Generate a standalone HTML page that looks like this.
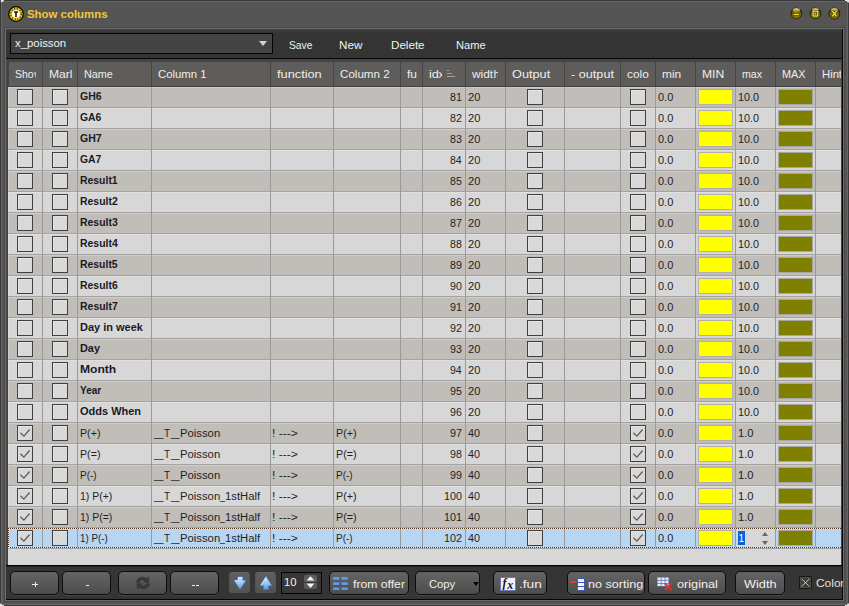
<!DOCTYPE html><html><head><meta charset="utf-8"><title>Show columns</title><style>
html,body{margin:0;padding:0}
body{width:849px;height:606px;overflow:hidden;background:#555;position:relative;font-family:"Liberation Sans",sans-serif;font-size:11.5px;color:#1e1e24}
div,span{position:absolute;box-sizing:border-box;white-space:pre;transform-origin:0 0}
.t{line-height:14px;height:14px}
.w{color:#eee}
.h{top:62px;height:24px;background:#5f5d5b;overflow:hidden}
.r{left:8px;width:833px;height:20px;overflow:hidden}
.o{background:#c1bdb9;box-shadow:inset 1px 1px 0 #cfcbc8}
.e{background:#d7d7d7;box-shadow:inset 1px 1px 0 #e0e0e0}
.s{background:#b8d6f1}
.hl{left:8px;width:833px;height:1px;background:#a5a3a1}
.vl{top:87px;width:1px;height:461px;background:#9c9a98}
.cb{width:16px;height:16px;top:2px;border:1px solid #404040;background:#d9d9d9;box-shadow:inset 1px 1px 0 #e4e4e4}
.c{line-height:14px;height:14px;font-size:10px}
.b{font-weight:bold;font-size:10.7px;color:#1a1a26}
.u{position:static;letter-spacing:-1.25px}
.y{left:690px;top:2px;width:35px;height:16px;background:#ffff00;border:1px solid #b2b0ac}
.m{left:770px;top:2px;width:35px;height:16px;background:#808000;border:1px solid #a9a7a3}
.btn{top:571px;height:24px;border-radius:5px;border:1px solid #0c0c0c;background:linear-gradient(#646464,#595959 50%,#4c4c4c);box-shadow:0 1px 0 #454545;color:#eee}
.ab{top:572px;width:21px;height:21px;border-radius:3px;border:1px solid #565656;border-top-color:#646464;background:linear-gradient(#5f5f5f,#535353)}
.cl{overflow:hidden;top:0;height:20px}
</style></head><body>
<div style="left:0;top:0;width:849px;height:606px;border:1px solid #3a3a3a;border-radius:3px"></div>
<div style="left:1px;top:1px;width:847px;height:604px;border:1px solid #666;border-radius:2px"></div>
<div style="left:1px;top:0px;width:3px;height:1px;background:#e6e6e6"></div>
<div style="left:1px;top:1px;width:2px;height:1px;background:#dcdcdc"></div>
<div style="left:1px;top:2px;width:1px;height:1px;background:#9a9a9a"></div>
<div style="left:845px;top:0px;width:4px;height:1px;background:#e6e6e6"></div>
<div style="left:847px;top:1px;width:2px;height:1px;background:#dcdcdc"></div>
<div style="left:848px;top:2px;width:1px;height:1px;background:#9a9a9a"></div>
<div style="left:0px;top:605px;width:4px;height:1px;background:#e6e6e6"></div>
<div style="left:0px;top:604px;width:2px;height:1px;background:#dcdcdc"></div>
<div style="left:0px;top:603px;width:1px;height:1px;background:#9a9a9a"></div>
<div style="left:845px;top:605px;width:4px;height:1px;background:#e6e6e6"></div>
<div style="left:847px;top:604px;width:2px;height:1px;background:#dcdcdc"></div>
<div style="left:848px;top:603px;width:1px;height:1px;background:#9a9a9a"></div>
<svg style="position:absolute;left:8px;top:6px" width="16" height="16" viewBox="0 0 16 16"><circle cx="8" cy="8" r="7.3" fill="#ecc800" stroke="#0a0a00" stroke-width="1.3"/><circle cx="8" cy="8" r="5.3" fill="none" stroke="#4a3800" stroke-width="1.4" stroke-dasharray="1.1 1.7"/><circle cx="8" cy="8" r="3.9" fill="#fff"/><path d="M6 5.2h4v1.5h-1.2v4.6h-1.6v-4.6h-1.2z" fill="#1a1a1a"/></svg>
<span class="t" style="left:26.97px;top:7.02px;font-weight:bold;transform:scaleX(0.992);color:#f4c832;">Show columns</span>
<svg style="position:absolute;left:0;top:0" width="0" height="0"><defs><radialGradient id="wb" cx="50%" cy="62%" r="55%"><stop offset="0" stop-color="#94841a"/><stop offset="0.65" stop-color="#746608"/><stop offset="0.9" stop-color="#453c04"/><stop offset="1" stop-color="#2a2504"/></radialGradient><linearGradient id="wh" x1="0" y1="0" x2="0" y2="1"><stop offset="0" stop-color="#fffaa8" stop-opacity="1"/><stop offset="1" stop-color="#d8c840" stop-opacity="0.1"/></linearGradient></defs></svg>
<svg style="position:absolute;left:790px;top:7px" width="14" height="14" viewBox="-0.4 -0.5 14 14"><circle cx="6" cy="6" r="5.5" fill="url(#wb)" stroke="#24200a" stroke-width="0.8"/><ellipse cx="6" cy="2.9" rx="3.6" ry="2.1" fill="url(#wh)"/><rect x="2.6" y="5.7" width="6.8" height="2.7" rx="1.3" fill="#3a3204"/><rect x="3.2" y="6.3" width="5.6" height="1.5" rx="0.6" fill="#f0dc30"/></svg>
<svg style="position:absolute;left:809px;top:7px" width="14" height="14" viewBox="-0.4 -0.5 14 14"><circle cx="6" cy="6" r="5.5" fill="url(#wb)" stroke="#24200a" stroke-width="0.8"/><ellipse cx="6" cy="2.9" rx="3.6" ry="2.1" fill="url(#wh)"/><rect x="3.7" y="3.7" width="4.6" height="4.8" fill="none" stroke="#3a3204" stroke-width="2.2"/><rect x="3.7" y="3.7" width="4.6" height="4.8" fill="none" stroke="#f4e034" stroke-width="1.35"/><rect x="5.4" y="5.5" width="1.2" height="1.2" fill="#f4e034"/></svg>
<svg style="position:absolute;left:828px;top:7px" width="14" height="14" viewBox="-0.4 -0.5 14 14"><circle cx="6" cy="6" r="5.5" fill="url(#wb)" stroke="#24200a" stroke-width="0.8"/><ellipse cx="6" cy="2.9" rx="3.6" ry="2.1" fill="url(#wh)"/><path d="M3.9 3.6L8.1 8.8M8.1 3.6L3.9 8.8" stroke="#3a3204" stroke-width="2.4"/><path d="M3.9 3.6L8.1 8.8M8.1 3.6L3.9 8.8" stroke="#f4e034" stroke-width="1.45"/></svg>
<div style="left:4px;top:27px;width:841px;height:575px;border:1px solid #484848"></div>
<div style="left:5px;top:28px;width:839px;height:573px;border:1px solid #6c6c6c;background:#353535"></div>
<div style="left:6px;top:29px;width:836px;height:3px;background:linear-gradient(#424242,#353535)"></div>
<div style="left:842px;top:29px;width:1px;height:571px;background:#050505"></div>
<div style="left:6px;top:599px;width:837px;height:1px;background:#050505"></div>
<div style="left:6px;top:32px;width:836px;height:26px;background:#343434"></div>
<div style="left:10px;top:33px;width:263px;height:21px;background:#434343;border:1px solid #050505"></div>
<span class="t" style="left:15.37px;top:36.42px;transform:scaleX(0.988);color:#f2f2f2;">x_poisson</span>
<div style="left:259px;top:41px;width:0;height:0;border-left:4px solid transparent;border-right:4px solid transparent;border-top:5px solid #d4d4d4"></div>
<span class="t" style="left:288.83px;top:38.02px;transform:scaleX(0.894);color:#f2f2f2;">Save</span>
<span class="t" style="left:338.64px;top:38.02px;transform:scaleX(1.014);color:#f2f2f2;">New</span>
<span class="t" style="left:390.55px;top:38.02px;transform:scaleX(1.01);color:#f2f2f2;">Delete</span>
<span class="t" style="left:455.69px;top:38.02px;transform:scaleX(0.965);color:#f2f2f2;">Name</span>
<div style="left:6px;top:58px;width:836px;height:1px;background:#050505"></div>
<div style="left:6px;top:59px;width:836px;height:506px;background:#454545"></div>
<div style="left:8px;top:86px;width:833px;height:479px;background:#d7d7d7"></div>
<div style="left:8px;top:86px;width:833px;height:1px;background:#414141"></div>
<div style="left:6px;top:565px;width:836px;height:1px;background:#050505"></div><div style="left:6px;top:566px;width:836px;height:1px;background:#242424"></div>
<div class="h" style="left:9px;width:33px"><span class="t" style="left:6.02px;top:5.02px;transform:scaleX(0.91);color:#eee;">Sho</span><span class="t" style="left:25.22px;top:5.02px;color:#eee;width:1.7px;overflow:hidden;">w</span></div>
<div class="h" style="left:43px;width:34px"><span class="t" style="left:5.61px;top:5.02px;transform:scaleX(1.051);color:#eee;">Marl</span></div>
<div class="h" style="left:78px;width:73px"><span class="t" style="left:5.51px;top:5.02px;transform:scaleX(0.941);color:#eee;">Name</span></div>
<div class="h" style="left:152px;width:118px"><span class="t" style="left:6.12px;top:5.02px;transform:scaleX(0.988);color:#eee;">Column 1</span></div>
<div class="h" style="left:271px;width:62px"><span class="t" style="left:5.62px;top:5.02px;transform:scaleX(1.11);color:#eee;">function</span></div>
<div class="h" style="left:334px;width:66px"><span class="t" style="left:5.71px;top:5.02px;transform:scaleX(1.009);color:#eee;">Column 2</span></div>
<div class="h" style="left:401px;width:21px"><span class="t" style="left:5.83px;top:5.02px;transform:scaleX(1.039);color:#eee;">fu</span></div>
<div class="h" style="left:423px;width:42px"><span class="t" style="left:5.95px;top:5.02px;transform:scaleX(1.102);color:#eee;">id</span><span class="t" style="left:15.47px;top:5.02px;color:#eee;width:3.2px;overflow:hidden;">x</span><div style="left:24px;top:8px;width:2px;height:1px;background:#a3a19f"></div><div style="left:24px;top:11px;width:5px;height:1px;background:#a3a19f"></div><div style="left:24px;top:14px;width:8px;height:1px;background:#a3a19f"></div></div>
<div class="h" style="left:466px;width:39px"><span class="t" style="left:6.22px;top:5.02px;transform:scaleX(1.03);color:#eee;">widt</span><span class="t" style="left:27.4px;top:5.02px;color:#eee;width:4.6px;overflow:hidden;">h</span></div>
<div class="h" style="left:506px;width:58px"><span class="t" style="left:5.9px;top:5.02px;transform:scaleX(1.106);color:#eee;">Output</span></div>
<div class="h" style="left:565px;width:55px"><span class="t" style="left:5.84px;top:5.02px;transform:scaleX(1.101);color:#eee;">- output</span></div>
<div class="h" style="left:621px;width:34px"><span class="t" style="left:6.2px;top:5.02px;transform:scaleX(1.029);color:#eee;">colo</span></div>
<div class="h" style="left:656px;width:39px"><span class="t" style="left:6.01px;top:5.02px;transform:scaleX(1.04);color:#eee;">min</span></div>
<div class="h" style="left:696px;width:39px"><span class="t" style="left:5.51px;top:5.02px;transform:scaleX(1.052);color:#eee;">MIN</span></div>
<div class="h" style="left:736px;width:39px"><span class="t" style="left:5.99px;top:5.02px;transform:scaleX(0.926);color:#eee;">max</span></div>
<div class="h" style="left:776px;width:39px"><span class="t" style="left:5.71px;top:5.02px;transform:scaleX(0.944);color:#eee;">MAX</span></div>
<div class="h" style="left:816px;width:25px"><span class="t" style="left:5.67px;top:5.02px;transform:scaleX(0.989);color:#eee;">Hin</span><span class="t" style="left:22.63px;top:5.02px;color:#eee;">t</span></div>
<div style="left:42px;top:62px;width:1px;height:24px;background:#474645"></div>
<div style="left:77px;top:62px;width:1px;height:24px;background:#474645"></div>
<div style="left:151px;top:62px;width:1px;height:24px;background:#474645"></div>
<div style="left:270px;top:62px;width:1px;height:24px;background:#474645"></div>
<div style="left:333px;top:62px;width:1px;height:24px;background:#474645"></div>
<div style="left:400px;top:62px;width:1px;height:24px;background:#474645"></div>
<div style="left:422px;top:62px;width:1px;height:24px;background:#474645"></div>
<div style="left:465px;top:62px;width:1px;height:24px;background:#474645"></div>
<div style="left:505px;top:62px;width:1px;height:24px;background:#474645"></div>
<div style="left:564px;top:62px;width:1px;height:24px;background:#474645"></div>
<div style="left:620px;top:62px;width:1px;height:24px;background:#474645"></div>
<div style="left:655px;top:62px;width:1px;height:24px;background:#474645"></div>
<div style="left:695px;top:62px;width:1px;height:24px;background:#474645"></div>
<div style="left:735px;top:62px;width:1px;height:24px;background:#474645"></div>
<div style="left:775px;top:62px;width:1px;height:24px;background:#474645"></div>
<div style="left:815px;top:62px;width:1px;height:24px;background:#474645"></div>
<div class="r o" style="top:87px">
<div class="cb" style="left:9px"></div><div class="cb" style="left:44px"></div>
<span class="c b" style="left:72.37px;top:1.99px;font-size:10.7px;font-weight:bold;transform:scaleX(0.982);">GH6</span>
<span class="c" style="left:442.44px;top:3.94px;font-size:10px;transform:scaleX(1.069);">81</span>
<span class="c" style="left:459.94px;top:3.94px;font-size:10px;transform:scaleX(1.105);">20</span>
<div class="cb" style="left:519px"></div><div class="cb" style="left:622px"></div>
<span class="c" style="left:649.97px;top:3.94px;font-size:10px;transform:scaleX(1.098);">0.0</span>
<div class="y"></div>
<span class="c" style="left:730.28px;top:3.94px;font-size:10px;transform:scaleX(1.081);">10.0</span>
<div class="m"></div></div>
<div class="hl" style="top:107px"></div>
<div class="r e" style="top:108px">
<div class="cb" style="left:9px"></div><div class="cb" style="left:44px"></div>
<span class="c b" style="left:72.38px;top:1.99px;font-size:10.7px;font-weight:bold;transform:scaleX(0.968);">GA6</span>
<span class="c" style="left:442.44px;top:3.94px;font-size:10px;transform:scaleX(1.07);">82</span>
<span class="c" style="left:459.94px;top:3.94px;font-size:10px;transform:scaleX(1.105);">20</span>
<div class="cb" style="left:519px"></div><div class="cb" style="left:622px"></div>
<span class="c" style="left:649.97px;top:3.94px;font-size:10px;transform:scaleX(1.098);">0.0</span>
<div class="y"></div>
<span class="c" style="left:730.28px;top:3.94px;font-size:10px;transform:scaleX(1.081);">10.0</span>
<div class="m"></div></div>
<div class="hl" style="top:128px"></div>
<div class="r o" style="top:129px">
<div class="cb" style="left:9px"></div><div class="cb" style="left:44px"></div>
<span class="c b" style="left:72.37px;top:1.99px;font-size:10.7px;font-weight:bold;transform:scaleX(0.986);">GH7</span>
<span class="c" style="left:442.44px;top:3.94px;font-size:10px;transform:scaleX(1.064);">83</span>
<span class="c" style="left:459.94px;top:3.94px;font-size:10px;transform:scaleX(1.105);">20</span>
<div class="cb" style="left:519px"></div><div class="cb" style="left:622px"></div>
<span class="c" style="left:649.97px;top:3.94px;font-size:10px;transform:scaleX(1.098);">0.0</span>
<div class="y"></div>
<span class="c" style="left:730.28px;top:3.94px;font-size:10px;transform:scaleX(1.081);">10.0</span>
<div class="m"></div></div>
<div class="hl" style="top:149px"></div>
<div class="r e" style="top:150px">
<div class="cb" style="left:9px"></div><div class="cb" style="left:44px"></div>
<span class="c b" style="left:72.37px;top:1.99px;font-size:10.7px;font-weight:bold;transform:scaleX(0.972);">GA7</span>
<span class="c" style="left:442.44px;top:3.94px;font-size:10px;transform:scaleX(1.049);">84</span>
<span class="c" style="left:459.94px;top:3.94px;font-size:10px;transform:scaleX(1.105);">20</span>
<div class="cb" style="left:519px"></div><div class="cb" style="left:622px"></div>
<span class="c" style="left:649.97px;top:3.94px;font-size:10px;transform:scaleX(1.098);">0.0</span>
<div class="y"></div>
<span class="c" style="left:730.28px;top:3.94px;font-size:10px;transform:scaleX(1.081);">10.0</span>
<div class="m"></div></div>
<div class="hl" style="top:170px"></div>
<div class="r o" style="top:171px">
<div class="cb" style="left:9px"></div><div class="cb" style="left:44px"></div>
<span class="c b" style="left:72.1px;top:1.99px;font-size:10.7px;font-weight:bold;transform:scaleX(0.975);">Result1</span>
<span class="c" style="left:442.44px;top:3.94px;font-size:10px;transform:scaleX(1.061);">85</span>
<span class="c" style="left:459.94px;top:3.94px;font-size:10px;transform:scaleX(1.105);">20</span>
<div class="cb" style="left:519px"></div><div class="cb" style="left:622px"></div>
<span class="c" style="left:649.97px;top:3.94px;font-size:10px;transform:scaleX(1.098);">0.0</span>
<div class="y"></div>
<span class="c" style="left:730.28px;top:3.94px;font-size:10px;transform:scaleX(1.081);">10.0</span>
<div class="m"></div></div>
<div class="hl" style="top:191px"></div>
<div class="r e" style="top:192px">
<div class="cb" style="left:9px"></div><div class="cb" style="left:44px"></div>
<span class="c b" style="left:72.1px;top:1.99px;font-size:10.7px;font-weight:bold;transform:scaleX(0.978);">Result2</span>
<span class="c" style="left:442.44px;top:3.94px;font-size:10px;transform:scaleX(1.064);">86</span>
<span class="c" style="left:459.94px;top:3.94px;font-size:10px;transform:scaleX(1.105);">20</span>
<div class="cb" style="left:519px"></div><div class="cb" style="left:622px"></div>
<span class="c" style="left:649.97px;top:3.94px;font-size:10px;transform:scaleX(1.098);">0.0</span>
<div class="y"></div>
<span class="c" style="left:730.28px;top:3.94px;font-size:10px;transform:scaleX(1.081);">10.0</span>
<div class="m"></div></div>
<div class="hl" style="top:212px"></div>
<div class="r o" style="top:213px">
<div class="cb" style="left:9px"></div><div class="cb" style="left:44px"></div>
<span class="c b" style="left:72.1px;top:1.99px;font-size:10.7px;font-weight:bold;transform:scaleX(0.977);">Result3</span>
<span class="c" style="left:442.44px;top:3.94px;font-size:10px;transform:scaleX(1.07);">87</span>
<span class="c" style="left:459.94px;top:3.94px;font-size:10px;transform:scaleX(1.105);">20</span>
<div class="cb" style="left:519px"></div><div class="cb" style="left:622px"></div>
<span class="c" style="left:649.97px;top:3.94px;font-size:10px;transform:scaleX(1.098);">0.0</span>
<div class="y"></div>
<span class="c" style="left:730.28px;top:3.94px;font-size:10px;transform:scaleX(1.081);">10.0</span>
<div class="m"></div></div>
<div class="hl" style="top:233px"></div>
<div class="r e" style="top:234px">
<div class="cb" style="left:9px"></div><div class="cb" style="left:44px"></div>
<span class="c b" style="left:72.1px;top:1.99px;font-size:10.7px;font-weight:bold;transform:scaleX(0.977);">Result4</span>
<span class="c" style="left:442.44px;top:3.94px;font-size:10px;transform:scaleX(1.063);">88</span>
<span class="c" style="left:459.94px;top:3.94px;font-size:10px;transform:scaleX(1.105);">20</span>
<div class="cb" style="left:519px"></div><div class="cb" style="left:622px"></div>
<span class="c" style="left:649.97px;top:3.94px;font-size:10px;transform:scaleX(1.098);">0.0</span>
<div class="y"></div>
<span class="c" style="left:730.28px;top:3.94px;font-size:10px;transform:scaleX(1.081);">10.0</span>
<div class="m"></div></div>
<div class="hl" style="top:254px"></div>
<div class="r o" style="top:255px">
<div class="cb" style="left:9px"></div><div class="cb" style="left:44px"></div>
<span class="c b" style="left:72.1px;top:1.99px;font-size:10.7px;font-weight:bold;transform:scaleX(0.975);">Result5</span>
<span class="c" style="left:442.44px;top:3.94px;font-size:10px;transform:scaleX(1.067);">89</span>
<span class="c" style="left:459.94px;top:3.94px;font-size:10px;transform:scaleX(1.105);">20</span>
<div class="cb" style="left:519px"></div><div class="cb" style="left:622px"></div>
<span class="c" style="left:649.97px;top:3.94px;font-size:10px;transform:scaleX(1.098);">0.0</span>
<div class="y"></div>
<span class="c" style="left:730.28px;top:3.94px;font-size:10px;transform:scaleX(1.081);">10.0</span>
<div class="m"></div></div>
<div class="hl" style="top:275px"></div>
<div class="r e" style="top:276px">
<div class="cb" style="left:9px"></div><div class="cb" style="left:44px"></div>
<span class="c b" style="left:72.1px;top:1.99px;font-size:10.7px;font-weight:bold;transform:scaleX(0.977);">Result6</span>
<span class="c" style="left:442.4px;top:3.94px;font-size:10px;transform:scaleX(1.062);">90</span>
<span class="c" style="left:459.94px;top:3.94px;font-size:10px;transform:scaleX(1.105);">20</span>
<div class="cb" style="left:519px"></div><div class="cb" style="left:622px"></div>
<span class="c" style="left:649.97px;top:3.94px;font-size:10px;transform:scaleX(1.098);">0.0</span>
<div class="y"></div>
<span class="c" style="left:730.28px;top:3.94px;font-size:10px;transform:scaleX(1.081);">10.0</span>
<div class="m"></div></div>
<div class="hl" style="top:296px"></div>
<div class="r o" style="top:297px">
<div class="cb" style="left:9px"></div><div class="cb" style="left:44px"></div>
<span class="c b" style="left:72.1px;top:1.99px;font-size:10.7px;font-weight:bold;transform:scaleX(0.98);">Result7</span>
<span class="c" style="left:442.4px;top:3.94px;font-size:10px;transform:scaleX(1.072);">91</span>
<span class="c" style="left:459.94px;top:3.94px;font-size:10px;transform:scaleX(1.105);">20</span>
<div class="cb" style="left:519px"></div><div class="cb" style="left:622px"></div>
<span class="c" style="left:649.97px;top:3.94px;font-size:10px;transform:scaleX(1.098);">0.0</span>
<div class="y"></div>
<span class="c" style="left:730.28px;top:3.94px;font-size:10px;transform:scaleX(1.081);">10.0</span>
<div class="m"></div></div>
<div class="hl" style="top:317px"></div>
<div class="r e" style="top:318px">
<div class="cb" style="left:9px"></div><div class="cb" style="left:44px"></div>
<span class="c b" style="left:72.06px;top:1.99px;font-size:10.7px;font-weight:bold;transform:scaleX(1.027);">Day in week</span>
<span class="c" style="left:442.4px;top:3.94px;font-size:10px;transform:scaleX(1.074);">92</span>
<span class="c" style="left:459.94px;top:3.94px;font-size:10px;transform:scaleX(1.105);">20</span>
<div class="cb" style="left:519px"></div><div class="cb" style="left:622px"></div>
<span class="c" style="left:649.97px;top:3.94px;font-size:10px;transform:scaleX(1.098);">0.0</span>
<div class="y"></div>
<span class="c" style="left:730.28px;top:3.94px;font-size:10px;transform:scaleX(1.081);">10.0</span>
<div class="m"></div></div>
<div class="hl" style="top:338px"></div>
<div class="r o" style="top:339px">
<div class="cb" style="left:9px"></div><div class="cb" style="left:44px"></div>
<span class="c b" style="left:72.07px;top:1.99px;font-size:10.7px;font-weight:bold;transform:scaleX(1.018);">Day</span>
<span class="c" style="left:442.4px;top:3.94px;font-size:10px;transform:scaleX(1.067);">93</span>
<span class="c" style="left:459.94px;top:3.94px;font-size:10px;transform:scaleX(1.105);">20</span>
<div class="cb" style="left:519px"></div><div class="cb" style="left:622px"></div>
<span class="c" style="left:649.97px;top:3.94px;font-size:10px;transform:scaleX(1.098);">0.0</span>
<div class="y"></div>
<span class="c" style="left:730.28px;top:3.94px;font-size:10px;transform:scaleX(1.081);">10.0</span>
<div class="m"></div></div>
<div class="hl" style="top:359px"></div>
<div class="r e" style="top:360px">
<div class="cb" style="left:9px"></div><div class="cb" style="left:44px"></div>
<span class="c b" style="left:71.99px;top:1.99px;font-size:10.7px;font-weight:bold;transform:scaleX(1.13);">Month</span>
<span class="c" style="left:442.41px;top:3.94px;font-size:10px;transform:scaleX(1.052);">94</span>
<span class="c" style="left:459.94px;top:3.94px;font-size:10px;transform:scaleX(1.105);">20</span>
<div class="cb" style="left:519px"></div><div class="cb" style="left:622px"></div>
<span class="c" style="left:649.97px;top:3.94px;font-size:10px;transform:scaleX(1.098);">0.0</span>
<div class="y"></div>
<span class="c" style="left:730.28px;top:3.94px;font-size:10px;transform:scaleX(1.081);">10.0</span>
<div class="m"></div></div>
<div class="hl" style="top:380px"></div>
<div class="r o" style="top:381px">
<div class="cb" style="left:9px"></div><div class="cb" style="left:44px"></div>
<span class="c b" style="left:72.33px;top:1.99px;font-size:10.7px;font-weight:bold;transform:scaleX(0.941);">Year</span>
<span class="c" style="left:442.4px;top:3.94px;font-size:10px;transform:scaleX(1.065);">95</span>
<span class="c" style="left:459.94px;top:3.94px;font-size:10px;transform:scaleX(1.105);">20</span>
<div class="cb" style="left:519px"></div><div class="cb" style="left:622px"></div>
<span class="c" style="left:649.97px;top:3.94px;font-size:10px;transform:scaleX(1.098);">0.0</span>
<div class="y"></div>
<span class="c" style="left:730.28px;top:3.94px;font-size:10px;transform:scaleX(1.081);">10.0</span>
<div class="m"></div></div>
<div class="hl" style="top:401px"></div>
<div class="r e" style="top:402px">
<div class="cb" style="left:9px"></div><div class="cb" style="left:44px"></div>
<span class="c b" style="left:72.15px;top:1.99px;font-size:10.7px;font-weight:bold;transform:scaleX(1.028);">Odds When</span>
<span class="c" style="left:442.4px;top:3.94px;font-size:10px;transform:scaleX(1.067);">96</span>
<span class="c" style="left:459.94px;top:3.94px;font-size:10px;transform:scaleX(1.105);">20</span>
<div class="cb" style="left:519px"></div><div class="cb" style="left:622px"></div>
<span class="c" style="left:649.97px;top:3.94px;font-size:10px;transform:scaleX(1.098);">0.0</span>
<div class="y"></div>
<span class="c" style="left:730.28px;top:3.94px;font-size:10px;transform:scaleX(1.081);">10.0</span>
<div class="m"></div></div>
<div class="hl" style="top:422px"></div>
<div class="r o" style="top:423px">
<div class="cb" style="left:9px"><svg style="position:absolute;left:0;top:0" width="14" height="14" viewBox="0 0 14 14"><path d="M2.4 6.7L5.9 10.2L11.6 3.5" fill="none" stroke="#5c5c5c" stroke-width="1.25"/></svg></div><div class="cb" style="left:44px"></div>
<span class="c" style="left:71.73px;top:3.94px;font-size:10px;transform:scaleX(1.066);">P(+)</span>
<span class="c" style="left:145.93px;top:3.94px;font-size:10px;transform:scaleX(0.843);">__</span>
<span class="c" style="left:155.88px;top:3.94px;font-size:10px;">T</span>
<span class="c" style="left:163.32px;top:3.94px;font-size:10px;transform:scaleX(0.773);">__</span>
<span class="c" style="left:171.87px;top:3.94px;font-size:10px;transform:scaleX(1.129);">Poisson</span>
<span class="c" style="left:264.12px;top:3.94px;font-size:10px;transform:scaleX(1.2);">! ---&gt;</span>
<span class="c" style="left:327.82px;top:3.94px;font-size:10px;transform:scaleX(1.077);">P(+)</span>
<span class="c" style="left:442.4px;top:3.94px;font-size:10px;transform:scaleX(1.074);">97</span>
<span class="c" style="left:460.25px;top:3.94px;font-size:10px;transform:scaleX(1.076);">40</span>
<div class="cb" style="left:519px"></div><div class="cb" style="left:622px"><svg style="position:absolute;left:0;top:0" width="14" height="14" viewBox="0 0 14 14"><path d="M2.4 6.7L5.9 10.2L11.6 3.5" fill="none" stroke="#5c5c5c" stroke-width="1.25"/></svg></div>
<span class="c" style="left:649.97px;top:3.94px;font-size:10px;transform:scaleX(1.098);">0.0</span>
<div class="y"></div>
<span class="c" style="left:730.25px;top:3.94px;font-size:10px;transform:scaleX(1.114);">1.0</span>
<div class="m"></div></div>
<div class="hl" style="top:443px"></div>
<div class="r e" style="top:444px">
<div class="cb" style="left:9px"><svg style="position:absolute;left:0;top:0" width="14" height="14" viewBox="0 0 14 14"><path d="M2.4 6.7L5.9 10.2L11.6 3.5" fill="none" stroke="#5c5c5c" stroke-width="1.25"/></svg></div><div class="cb" style="left:44px"></div>
<span class="c" style="left:71.73px;top:3.94px;font-size:10px;transform:scaleX(1.066);">P(=)</span>
<span class="c" style="left:145.93px;top:3.94px;font-size:10px;transform:scaleX(0.843);">__</span>
<span class="c" style="left:155.88px;top:3.94px;font-size:10px;">T</span>
<span class="c" style="left:163.32px;top:3.94px;font-size:10px;transform:scaleX(0.773);">__</span>
<span class="c" style="left:171.87px;top:3.94px;font-size:10px;transform:scaleX(1.129);">Poisson</span>
<span class="c" style="left:264.12px;top:3.94px;font-size:10px;transform:scaleX(1.2);">! ---&gt;</span>
<span class="c" style="left:327.82px;top:3.94px;font-size:10px;transform:scaleX(1.077);">P(=)</span>
<span class="c" style="left:442.4px;top:3.94px;font-size:10px;transform:scaleX(1.067);">98</span>
<span class="c" style="left:460.25px;top:3.94px;font-size:10px;transform:scaleX(1.076);">40</span>
<div class="cb" style="left:519px"></div><div class="cb" style="left:622px"><svg style="position:absolute;left:0;top:0" width="14" height="14" viewBox="0 0 14 14"><path d="M2.4 6.7L5.9 10.2L11.6 3.5" fill="none" stroke="#5c5c5c" stroke-width="1.25"/></svg></div>
<span class="c" style="left:649.97px;top:3.94px;font-size:10px;transform:scaleX(1.098);">0.0</span>
<div class="y"></div>
<span class="c" style="left:730.25px;top:3.94px;font-size:10px;transform:scaleX(1.114);">1.0</span>
<div class="m"></div></div>
<div class="hl" style="top:464px"></div>
<div class="r o" style="top:465px">
<div class="cb" style="left:9px"><svg style="position:absolute;left:0;top:0" width="14" height="14" viewBox="0 0 14 14"><path d="M2.4 6.7L5.9 10.2L11.6 3.5" fill="none" stroke="#5c5c5c" stroke-width="1.25"/></svg></div><div class="cb" style="left:44px"></div>
<span class="c" style="left:71.78px;top:3.94px;font-size:10px;transform:scaleX(0.999);">P(-)</span>
<span class="c" style="left:145.93px;top:3.94px;font-size:10px;transform:scaleX(0.843);">__</span>
<span class="c" style="left:155.88px;top:3.94px;font-size:10px;">T</span>
<span class="c" style="left:163.32px;top:3.94px;font-size:10px;transform:scaleX(0.773);">__</span>
<span class="c" style="left:171.87px;top:3.94px;font-size:10px;transform:scaleX(1.129);">Poisson</span>
<span class="c" style="left:264.12px;top:3.94px;font-size:10px;transform:scaleX(1.2);">! ---&gt;</span>
<span class="c" style="left:327.88px;top:3.94px;font-size:10px;transform:scaleX(0.999);">P(-)</span>
<span class="c" style="left:442.4px;top:3.94px;font-size:10px;transform:scaleX(1.071);">99</span>
<span class="c" style="left:460.25px;top:3.94px;font-size:10px;transform:scaleX(1.076);">40</span>
<div class="cb" style="left:519px"></div><div class="cb" style="left:622px"><svg style="position:absolute;left:0;top:0" width="14" height="14" viewBox="0 0 14 14"><path d="M2.4 6.7L5.9 10.2L11.6 3.5" fill="none" stroke="#5c5c5c" stroke-width="1.25"/></svg></div>
<span class="c" style="left:649.97px;top:3.94px;font-size:10px;transform:scaleX(1.098);">0.0</span>
<div class="y"></div>
<span class="c" style="left:730.25px;top:3.94px;font-size:10px;transform:scaleX(1.114);">1.0</span>
<div class="m"></div></div>
<div class="hl" style="top:485px"></div>
<div class="r e" style="top:486px">
<div class="cb" style="left:9px"><svg style="position:absolute;left:0;top:0" width="14" height="14" viewBox="0 0 14 14"><path d="M2.4 6.7L5.9 10.2L11.6 3.5" fill="none" stroke="#5c5c5c" stroke-width="1.25"/></svg></div><div class="cb" style="left:44px"></div>
<span class="c" style="left:71.8px;top:3.94px;font-size:10px;transform:scaleX(1.049);">1) P(+)</span>
<span class="c" style="left:145.93px;top:3.94px;font-size:10px;transform:scaleX(0.843);">__</span>
<span class="c" style="left:155.88px;top:3.94px;font-size:10px;">T</span>
<span class="c" style="left:163.32px;top:3.94px;font-size:10px;transform:scaleX(0.773);">__</span>
<span class="c" style="left:171.87px;top:3.94px;font-size:10px;transform:scaleX(1.129);">Poisson</span>
<span class="c" style="left:212.15px;top:3.94px;font-size:10px;transform:scaleX(0.88);">_</span>
<span class="c" style="left:217.14px;top:3.94px;font-size:10px;transform:scaleX(1.126);">1stHalf</span>
<span class="c" style="left:264.12px;top:3.94px;font-size:10px;transform:scaleX(1.2);">! ---&gt;</span>
<span class="c" style="left:327.82px;top:3.94px;font-size:10px;transform:scaleX(1.077);">P(+)</span>
<span class="c" style="left:436.28px;top:3.94px;font-size:10px;transform:scaleX(1.075);">100</span>
<span class="c" style="left:460.25px;top:3.94px;font-size:10px;transform:scaleX(1.076);">40</span>
<div class="cb" style="left:519px"></div><div class="cb" style="left:622px"><svg style="position:absolute;left:0;top:0" width="14" height="14" viewBox="0 0 14 14"><path d="M2.4 6.7L5.9 10.2L11.6 3.5" fill="none" stroke="#5c5c5c" stroke-width="1.25"/></svg></div>
<span class="c" style="left:649.97px;top:3.94px;font-size:10px;transform:scaleX(1.098);">0.0</span>
<div class="y"></div>
<span class="c" style="left:730.25px;top:3.94px;font-size:10px;transform:scaleX(1.114);">1.0</span>
<div class="m"></div></div>
<div class="hl" style="top:506px"></div>
<div class="r o" style="top:507px">
<div class="cb" style="left:9px"><svg style="position:absolute;left:0;top:0" width="14" height="14" viewBox="0 0 14 14"><path d="M2.4 6.7L5.9 10.2L11.6 3.5" fill="none" stroke="#5c5c5c" stroke-width="1.25"/></svg></div><div class="cb" style="left:44px"></div>
<span class="c" style="left:71.8px;top:3.94px;font-size:10px;transform:scaleX(1.049);">1) P(=)</span>
<span class="c" style="left:145.93px;top:3.94px;font-size:10px;transform:scaleX(0.843);">__</span>
<span class="c" style="left:155.88px;top:3.94px;font-size:10px;">T</span>
<span class="c" style="left:163.32px;top:3.94px;font-size:10px;transform:scaleX(0.773);">__</span>
<span class="c" style="left:171.87px;top:3.94px;font-size:10px;transform:scaleX(1.129);">Poisson</span>
<span class="c" style="left:212.15px;top:3.94px;font-size:10px;transform:scaleX(0.88);">_</span>
<span class="c" style="left:217.14px;top:3.94px;font-size:10px;transform:scaleX(1.126);">1stHalf</span>
<span class="c" style="left:264.12px;top:3.94px;font-size:10px;transform:scaleX(1.2);">! ---&gt;</span>
<span class="c" style="left:327.82px;top:3.94px;font-size:10px;transform:scaleX(1.077);">P(=)</span>
<span class="c" style="left:436.28px;top:3.94px;font-size:10px;transform:scaleX(1.082);">101</span>
<span class="c" style="left:460.25px;top:3.94px;font-size:10px;transform:scaleX(1.076);">40</span>
<div class="cb" style="left:519px"></div><div class="cb" style="left:622px"><svg style="position:absolute;left:0;top:0" width="14" height="14" viewBox="0 0 14 14"><path d="M2.4 6.7L5.9 10.2L11.6 3.5" fill="none" stroke="#5c5c5c" stroke-width="1.25"/></svg></div>
<span class="c" style="left:649.97px;top:3.94px;font-size:10px;transform:scaleX(1.098);">0.0</span>
<div class="y"></div>
<span class="c" style="left:730.25px;top:3.94px;font-size:10px;transform:scaleX(1.114);">1.0</span>
<div class="m"></div></div>
<div class="hl" style="top:527px"></div>
<div class="r s" style="top:528px">
<div class="cb" style="left:9px"><svg style="position:absolute;left:0;top:0" width="14" height="14" viewBox="0 0 14 14"><path d="M2.4 6.7L5.9 10.2L11.6 3.5" fill="none" stroke="#5c5c5c" stroke-width="1.25"/></svg></div><div class="cb" style="left:44px"></div>
<span class="c" style="left:71.85px;top:3.93px;font-size:10px;transform:scaleX(0.983);">1) P(-)</span>
<span class="c" style="left:145.93px;top:3.93px;font-size:10px;transform:scaleX(0.843);">__</span>
<span class="c" style="left:155.88px;top:3.93px;font-size:10px;">T</span>
<span class="c" style="left:163.32px;top:3.93px;font-size:10px;transform:scaleX(0.773);">__</span>
<span class="c" style="left:171.87px;top:3.93px;font-size:10px;transform:scaleX(1.129);">Poisson</span>
<span class="c" style="left:212.15px;top:3.93px;font-size:10px;transform:scaleX(0.88);">_</span>
<span class="c" style="left:217.14px;top:3.93px;font-size:10px;transform:scaleX(1.126);">1stHalf</span>
<span class="c" style="left:264.12px;top:3.93px;font-size:10px;transform:scaleX(1.2);">! ---&gt;</span>
<span class="c" style="left:327.88px;top:3.93px;font-size:10px;transform:scaleX(0.999);">P(-)</span>
<span class="c" style="left:436.28px;top:3.93px;font-size:10px;transform:scaleX(1.083);">102</span>
<span class="c" style="left:460.25px;top:3.93px;font-size:10px;transform:scaleX(1.076);">40</span>
<div class="cb" style="left:519px"></div><div class="cb" style="left:622px"><svg style="position:absolute;left:0;top:0" width="14" height="14" viewBox="0 0 14 14"><path d="M2.4 6.7L5.9 10.2L11.6 3.5" fill="none" stroke="#5c5c5c" stroke-width="1.25"/></svg></div>
<span class="c" style="left:649.97px;top:3.93px;font-size:10px;transform:scaleX(1.098);">0.0</span>
<div class="y"></div>
<div style="left:728px;top:0;width:39px;height:20px;background:#d7d7d7"></div><div style="left:730px;top:3px;width:7px;height:14px;background:#0a64d8"></div>
<span class="c" style="left:730.44px;top:3.93px;font-size:10px;color:#fff;">1</span>
<div style="left:754px;top:4px;width:0;height:0;border-left:3.5px solid transparent;border-right:3.5px solid transparent;border-bottom:4px solid #666"></div><div style="left:754px;top:13px;width:0;height:0;border-left:3.5px solid transparent;border-right:3.5px solid transparent;border-top:4px solid #666"></div>
<div class="m"></div></div>
<div class="hl" style="top:548px"></div>
<div class="vl" style="left:42px"></div>
<div class="vl" style="left:77px"></div>
<div class="vl" style="left:151px"></div>
<div class="vl" style="left:270px"></div>
<div class="vl" style="left:333px"></div>
<div class="vl" style="left:400px"></div>
<div class="vl" style="left:422px"></div>
<div class="vl" style="left:465px"></div>
<div class="vl" style="left:505px"></div>
<div class="vl" style="left:564px"></div>
<div class="vl" style="left:620px"></div>
<div class="vl" style="left:655px"></div>
<div class="vl" style="left:695px"></div>
<div class="vl" style="left:735px"></div>
<div class="vl" style="left:775px"></div>
<div class="vl" style="left:815px"></div>
<div style="left:8px;top:528px;width:833px;height:1px;background:repeating-linear-gradient(90deg,#4a2c14 0 1px,#e8eef4 1px 2px)"></div>
<div style="left:8px;top:547px;width:833px;height:1px;background:repeating-linear-gradient(90deg,#4a2c14 0 1px,#e8eef4 1px 2px)"></div>
<div style="left:8px;top:528px;width:1px;height:20px;background:repeating-linear-gradient(180deg,#4a2c14 0 1px,#e8eef4 1px 2px)"></div>
<div class="btn" style="left:10px;width:49px"><div style="left:21px;top:12px;width:6px;height:1px;background:#ececec"></div><div style="left:23.5px;top:10px;width:1px;height:5px;background:#ececec"></div></div>
<div class="btn" style="left:62px;width:49px"><div style="left:22.5px;top:13px;width:3px;height:1px;background:#ececec"></div></div>
<div class="btn" style="left:118px;width:49px"><svg style="position:absolute;left:16px;top:4px" width="16" height="14" viewBox="0.3 0.6 14.4 12.8" preserveAspectRatio="none"><path d="M1.5 6.5A5.6 5.2 0 0 1 11 3L12.8 1.4V6.4H7.8L9.4 4.8A3.4 3.2 0 0 0 4.2 6.5zM13.5 7.5A5.6 5.2 0 0 1 4 11L2.2 12.6V7.6H7.2L5.6 9.2A3.4 3.2 0 0 0 10.8 7.5z" fill="#383838" stroke="#383838" stroke-width="0.5" stroke-linejoin="round"/></svg></div>
<div class="btn" style="left:170px;width:49px"><div style="left:21px;top:13px;width:3px;height:1px;background:#ececec"></div><div style="left:25px;top:13px;width:3px;height:1px;background:#ececec"></div></div>
<div class="ab" style="left:229px"><svg style="position:absolute;left:3px;top:2px" width="14" height="16" viewBox="0 0 14 16"><defs><linearGradient id="bl" x1="0" y1="0" x2="0" y2="1"><stop offset="0" stop-color="#d6eaff"/><stop offset="0.55" stop-color="#94c6f4"/><stop offset="1" stop-color="#5a9ee6"/></linearGradient></defs><path d="M4.9 1.9H9.8V5.2H13.1L7 14.4L0.9 5.2H4.9z" fill="url(#bl)" stroke="#3f7ed0" stroke-width="0.7" stroke-linejoin="round"/><path d="M5.3 5V2.4H9.3" fill="none" stroke="#f4faff" stroke-width="0.7"/><path d="M1.8 5.7H5" fill="none" stroke="#f4faff" stroke-width="0.7"/></svg></div>
<div class="ab" style="left:255px"><svg style="position:absolute;left:3px;top:2px" width="14" height="16" viewBox="0 0 14 16"><path d="M7 1.2L13 10.8H9.5V14.4H4.5V10.8H1z" fill="url(#bl)" stroke="#3f7ed0" stroke-width="0.7" stroke-linejoin="round"/><path d="M2 10.2L7 2.2" fill="none" stroke="#f4faff" stroke-width="0.7"/></svg></div>
<div style="left:281px;top:572px;width:41px;height:22px;background:#373737;border:1px solid #050505"></div>
<span class="t" style="left:283.94px;top:575.02px;transform:scaleX(0.977);color:#f0f0f0;">10</span>
<div style="left:304px;top:575px;width:13px;height:7px;background:#5e5e5e;border-radius:2px 2px 0 0"></div><div style="left:304px;top:582.5px;width:13px;height:6.5px;background:#5a5a5a;border-radius:0 0 2px 2px"></div>
<svg style="position:absolute;left:304px;top:575px" width="13" height="14" viewBox="0 0 13 14"><path d="M2.6 5.6L6.5 1.2L10.4 5.6z" fill="#f6f6f6"/><path d="M2.6 8.6L6.5 13L10.4 8.6z" fill="#f6f6f6"/></svg>
<div class="btn" style="left:329px;width:80px"><svg style="position:absolute;left:3px;top:5px" width="15" height="14" viewBox="0 0 15 14"><rect x="0" y="0" width="6.4" height="2.7" rx="0.7" fill="#5a9cea"/><rect x="0" y="5.2" width="6.4" height="2.7" rx="0.7" fill="#5a9cea"/><rect x="0" y="10.4" width="6.4" height="2.7" rx="0.7" fill="#5a9cea"/><rect x="8.4" y="0" width="6.4" height="2.7" rx="0.7" fill="#5a9cea"/><rect x="8.4" y="5.2" width="6.4" height="2.7" rx="0.7" fill="#5a9cea"/><rect x="8.4" y="10.4" width="6.4" height="2.7" rx="0.7" fill="#5a9cea"/></svg><span class="t" style="left:22.93px;top:5.02px;transform:scaleX(1.06);color:#f0f0f0;">from offer</span></div>
<div class="btn" style="left:415px;width:65px"><span class="t" style="left:12.83px;top:5.02px;transform:scaleX(0.976);color:#f0f0f0;">Copy</span><div style="left:57px;top:10px;width:0;height:0;border-left:3.5px solid transparent;border-right:3.5px solid transparent;border-top:4px solid #050505"></div></div>
<div class="btn" style="left:493px;width:54px"><div style="left:6px;top:5px;width:16px;height:14px;background:#f2f2fa;border:1px solid #6a78c0"></div><span style="left:8.6px;top:3.6px;font-family:'Liberation Serif',serif;font-style:italic;font-weight:bold;font-size:12px;line-height:14px;color:#16161e">f</span><span style="left:13.2px;top:6.2px;font-family:'Liberation Serif',serif;font-style:italic;font-weight:bold;font-size:12px;line-height:14px;color:#16161e">x</span><span class="t" style="left:25.15px;top:5.02px;transform:scaleX(1.191);color:#f0f0f0;">.fun</span></div>
<div class="btn" style="left:567px;width:78px"><div style="left:2px;top:9px;width:6px;height:2px;background:#e83434"></div><div style="left:9px;top:6px;width:8px;height:13px;background:#f0f0f8;border:1px solid #4058b0"></div><div style="left:10px;top:10px;width:6px;height:1px;background:#4058b0"></div><div style="left:10px;top:14px;width:6px;height:1px;background:#4058b0"></div><span class="t" style="left:20.37px;top:5.02px;transform:scaleX(1.092);color:#f0f0f0;">no sorting</span></div>
<div class="btn" style="left:648px;width:78px"><svg style="position:absolute;left:8px;top:5px" width="16" height="15" viewBox="0 0 16 15"><rect x="0" y="0" width="12.2" height="9.6" fill="#4860b4"/><rect x="0.5" y="0.5" width="3.3" height="2.4" fill="#e4eaf6"/><rect x="0.5" y="3.6" width="3.3" height="2.4" fill="#e4eaf6"/><rect x="0.5" y="6.7" width="3.3" height="2.4" fill="#e4eaf6"/><rect x="4.4" y="0.5" width="3.3" height="2.4" fill="#e4eaf6"/><rect x="4.4" y="3.6" width="3.3" height="2.4" fill="#e4eaf6"/><rect x="4.4" y="6.7" width="3.3" height="2.4" fill="#e4eaf6"/><rect x="8.3" y="0.5" width="3.3" height="2.4" fill="#e4eaf6"/><rect x="8.3" y="3.6" width="3.3" height="2.4" fill="#e4eaf6"/><rect x="8.3" y="6.7" width="3.3" height="2.4" fill="#e4eaf6"/><path d="M8 6.5L14.5 13M14.5 6.5L8 13" stroke="#ec2c2c" stroke-width="2"/></svg><span class="t" style="left:27.97px;top:5.02px;transform:scaleX(1.103);color:#f0f0f0;">original</span></div>
<div class="btn" style="left:735px;width:50px"><span class="t" style="left:8.14px;top:5.02px;transform:scaleX(1.105);color:#f0f0f0;">Width</span></div>
<div style="left:799px;top:576px;width:13px;height:13px;background:#3c3c3c;border:1px solid #181818;box-shadow:inset 0 0 0 1px #4e4e4e"></div>
<svg style="position:absolute;left:801px;top:578px" width="9" height="9" viewBox="0 0 9 9"><path d="M0.7 0.9L8.2 8.4M8.2 0.9L0.7 8.4" stroke="#ecd444" stroke-width="1"/></svg>
<div style="left:814px;top:574px;width:29px;height:18px;overflow:hidden"><span class="t" style="left:2.39px;top:2.02px;transform:scaleX(1.036);color:#e6e3d6;">Colo</span><span class="t" style="left:26.24px;top:2.02px;color:#e6e3d6;">r</span></div>
</body></html>
